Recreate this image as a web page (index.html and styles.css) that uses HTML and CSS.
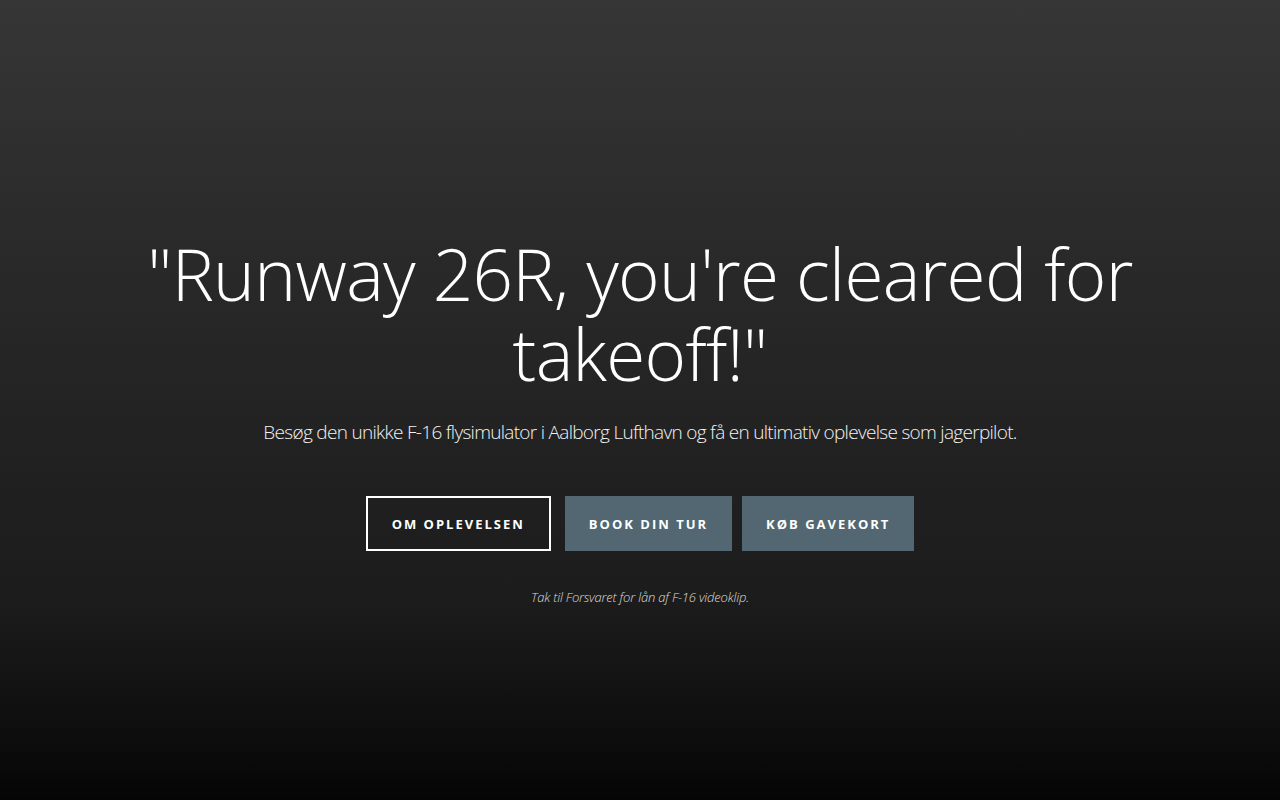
FILE: index.html
```html
<!DOCTYPE html>
<html lang="da">
<head>
<meta charset="utf-8">
<title>F-16 flysimulator</title>
<link rel="stylesheet" href="styles.css">
</head>
<body>
<main class="hero">
  <div class="hero-content">
    <h1 class="hero-title">"Runway 26R, you're cleared for takeoff!"</h1>
    <p class="hero-lead">Besøg den unikke F-16 flysimulator i Aalborg Lufthavn og få en ultimativ oplevelse som jagerpilot.</p>
    <div class="hero-actions">
      <a class="btn btn-outline" href="#">Om oplevelsen</a>
      <a class="btn btn-solid btn-book" href="#">Book din tur</a>
      <a class="btn btn-solid" href="#">Køb gavekort</a>
    </div>
    <p class="hero-credit">Tak til Forsvaret for lån af F-16 videoklip.</p>
  </div>
</main>
</body>
</html>
```

FILE: styles.css
```css
html, body {
  margin: 0;
  padding: 0;
  height: 100%;
}
body {
  font-family: "Open Sans", "Noto Sans", sans-serif;
  color: #fff;
  background: #050505;
}
.hero {
  height: 800px;
  display: flex;
  align-items: center;
  justify-content: center;
  background: linear-gradient(to bottom, #363636 0%, #2a2a2a 30%, #202020 60%, #1c1c1c 75%, #0f0f0f 90%, #050505 100%);
}
.hero-content {
  width: 1100px;
  text-align: center;
  margin-top: 40px;
}
.hero-title {
  margin: 0;
  font-weight: 300;
  font-size: 71px;
  line-height: 80px;
  letter-spacing: -0.7px;
}
.hero-lead {
  margin: 23px 0 0;
  font-weight: 300;
  font-size: 19px;
  line-height: 30px;
  letter-spacing: -0.7px;
  color: #f2f2f2;
}
.hero-actions {
  margin-top: 49px;
  display: flex;
  justify-content: center;
  gap: 10px;
}
.btn {
  box-sizing: border-box;
  height: 55px;
  display: inline-flex;
  align-items: center;
  justify-content: center;
  padding: 0 24px;
  font-size: 13px;
  font-weight: 700;
  letter-spacing: 2px;
  text-transform: uppercase;
  text-decoration: none;
  color: #fff;
}
.btn-outline {
  border: 2px solid #fff;
  margin-right: 4px;
}
.btn-solid {
  background: #526771;
}
.hero-credit {
  margin: 37px 0 0;
  font-size: 13px;
  font-style: italic;
  font-weight: 300;
  color: #dcdcdc;
  letter-spacing: -0.2px;
}
```
